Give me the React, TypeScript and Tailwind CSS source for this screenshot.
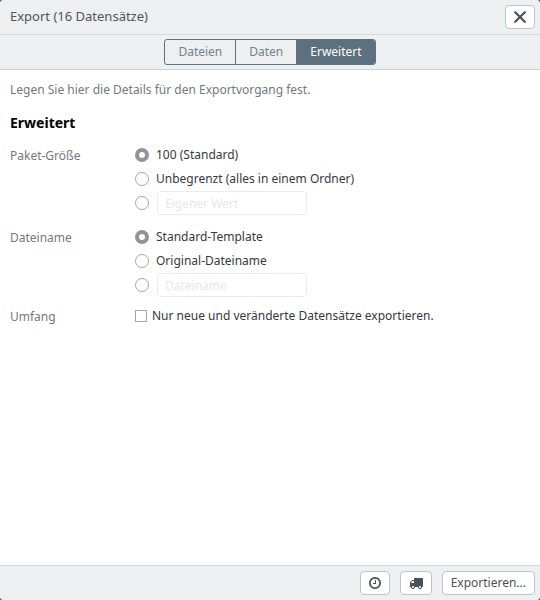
import { useState } from 'react';
import type { ReactNode } from 'react';

const tabs = ['Dateien', 'Daten', 'Erweitert'];

function ClockIcon() {
  return (
    <svg viewBox="0 0 1792 1792" className="size-[14px]" fill="currentColor" aria-hidden="true">
      <path d="M1024 544v448q0 14-9 23t-23 9h-320q-14 0-23-9t-9-23v-64q0-14 9-23t23-9h224v-352q0-14 9-23t23-9h64q14 0 23 9t9 23zm416 352q0-148-73-273t-198-198-273-73-273 73-198 198-73 273 73 273 198 198 273 73 273-73 198-198 73-273zm224 0q0 209-103 385.5t-279.5 279.5-385.5 103-385.5-103-279.5-279.5-103-385.5 103-385.5 279.5-279.5 385.5-103 385.5 103 279.5 279.5 103 385.5z" />
    </svg>
  );
}

function TruckIcon() {
  return (
    <svg viewBox="0 0 1792 1792" className="size-[14px]" fill="currentColor" aria-hidden="true">
      <path d="M640 1408q0-52-38-90t-90-38-90 38-38 90 38 90 90 38 90-38 38-90zm-384-512h384v-256h-158q-13 0-22 9l-195 195q-9 9-9 22v30zm1280 512q0-52-38-90t-90-38-90 38-38 90 38 90 90 38 90-38 38-90zm256-1088v1024q0 15-4 26.5t-13.5 18.5-16.5 11.5-23.5 6-22.5 2-25.5 0-22.5-.5q0 106-75 181t-181 75-181-75-75-181h-384q0 106-75 181t-181 75-181-75-75-181h-64q-3 0-22.5.5t-25.5 0-22.5-2-23.5-6-16.5-11.5-13.5-18.5-4-26.5q0-26 19-45t45-19v-320q0-8-.5-35t0-38 2.5-34.5 6.5-37 14-30.5 22.5-30l198-198q19-19 50.5-32t58.5-13h160v-192q0-26 19-45t45-19h1024q26 0 45 19t19 45z" />
    </svg>
  );
}

const radioClass =
  'size-[14px] shrink-0 appearance-none rounded-full border border-[#a4a6a8] bg-white checked:border-[4px] checked:border-[#929497]';

const buttonClass =
  'flex h-6 items-center justify-center rounded-[4px] border border-[#bcc5cb] bg-white text-[#4a5358]';

type RadioGroupProps = {
  name: string;
  legend: string;
  options: string[];
  placeholder: string;
};

function FieldRow({ label, children }: { label: string; children: ReactNode }) {
  return (
    <fieldset className="flex">
      <legend className="float-left w-[125px] shrink-0 leading-[26px] text-[#72797e]">{label}</legend>
      <div className="min-w-0 flex-1">{children}</div>
    </fieldset>
  );
}

function RadioGroup({ name, legend, options, placeholder }: RadioGroupProps) {
  const [value, setValue] = useState(options[0]);
  return (
    <FieldRow label={legend}>
      {options.map((option) => (
        <label key={option} className="flex h-6 items-center gap-[7px] text-[#36393b]">
          <input
            type="radio"
            name={name}
            checked={value === option}
            onChange={() => setValue(option)}
            className={radioClass}
          />
          {option}
        </label>
      ))}
      <div className="flex h-6 items-center gap-2">
        <input
          type="radio"
          name={name}
          aria-label={placeholder}
          checked={value === 'custom'}
          onChange={() => setValue('custom')}
          className={radioClass}
        />
        <input
          type="text"
          aria-label={placeholder}
          placeholder={placeholder}
          disabled={value !== 'custom'}
          className="h-6 w-[150px] rounded-[4px] border border-[#e9ecee] bg-white px-[7px] placeholder:text-[#e6e8ea]"
        />
      </div>
    </FieldRow>
  );
}

export default function App() {
  const [active, setActive] = useState('Erweitert');
  return (
    <div className="h-screen bg-[#5b5b5b] font-['Noto_Sans','Open_Sans',sans-serif] text-[12px]">
      <div className="flex h-full flex-col overflow-hidden rounded-[4px] bg-white">
        <header className="flex h-[35px] shrink-0 items-center justify-between border-b border-[#d3dce3] bg-[#edeff0] pr-[5px] pl-[10px]">
          <h1 className="text-[13px] text-[#4f5559]">Export (16 Datensätze)</h1>
          <button type="button" aria-label="Schließen" className={`${buttonClass} w-[30px]`}>
            <svg viewBox="0 0 12 12" className="size-3" fill="none" stroke="currentColor" strokeWidth="2.2" strokeLinecap="round" aria-hidden="true">
              <path d="M1.2 1.2l9.6 9.6M10.8 1.2L1.2 10.8" />
            </svg>
          </button>
        </header>

        <nav className="flex h-[35px] shrink-0 items-center justify-center border-b border-[#c9d3da] bg-[#edeff0]">
          <div className="flex h-[26px] overflow-hidden rounded-[3px] border border-[#5d717e]">
            {tabs.map((tab) => (
              <button
                key={tab}
                type="button"
                aria-pressed={active === tab}
                onClick={() => setActive(tab)}
                className="border-r border-[#5d717e] px-[13px] text-[#72838e] last:border-r-0 aria-pressed:bg-[#5d707d] aria-pressed:text-white"
              >
                {tab}
              </button>
            ))}
          </div>
        </nav>

        <main className="min-h-0 flex-1 overflow-auto px-[10px] pt-[10px]">
          <p className="leading-5 text-[#72797e]">Legen Sie hier die Details für den Exportvorgang fest.</p>
          <h2 className="mt-3 text-[14px] leading-[22px] font-bold text-black">Erweitert</h2>
          <div className="mt-[9px] flex flex-col gap-[10px]">
            <RadioGroup
              name="paket"
              legend="Paket-Größe"
              options={['100 (Standard)', 'Unbegrenzt (alles in einem Ordner)']}
              placeholder="Eigener Wert"
            />
            <RadioGroup
              name="dateiname"
              legend="Dateiname"
              options={['Standard-Template', 'Original-Dateiname']}
              placeholder="Dateiname"
            />
          </div>
          <div className="mt-[7px]">
            <FieldRow label="Umfang">
              <label className="flex h-6 items-center gap-[5px] text-[#36393b]">
                <input type="checkbox" className="size-3 shrink-0 appearance-none border border-[#a4a6a8] bg-white checked:bg-[#929497]" />
                Nur neue und veränderte Datensätze exportieren.
              </label>
            </FieldRow>
          </div>
        </main>

        <footer className="flex h-[35px] shrink-0 items-center justify-end gap-[10px] border-t border-[#d3d8db] bg-[#edeff0] pr-[5px]">
          <button type="button" aria-label="Zeitplan" className={`${buttonClass} w-[30px]`}>
            <ClockIcon />
          </button>
          <button type="button" aria-label="Transport" className={`${buttonClass} w-8`}>
            <TruckIcon />
          </button>
          <button type="button" className={`${buttonClass} px-2`}>
            Exportieren...
          </button>
        </footer>
      </div>
    </div>
  );
}
